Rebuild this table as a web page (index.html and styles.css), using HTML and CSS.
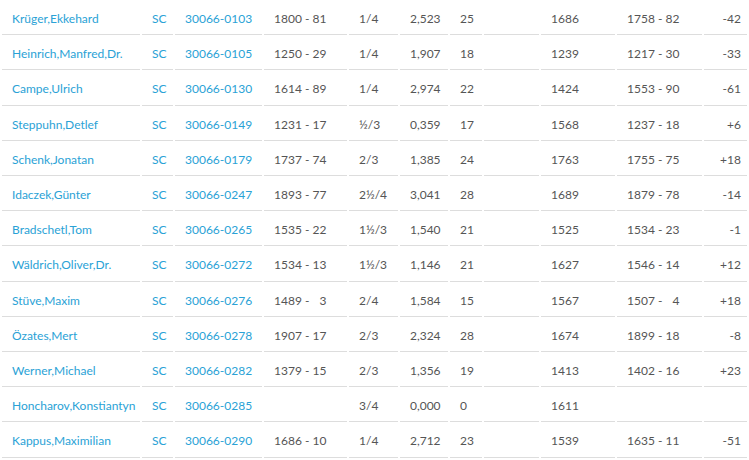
FILE: index.html
```html
<!DOCTYPE html>
<html lang="de">
<head>
<meta charset="utf-8">
<title>Spielerliste</title>
<link rel="stylesheet" href="styles.css">
</head>
<body>
<table class="players">
<colgroup>
<col class="w-name"><col class="w-club"><col class="w-id"><col class="w-elo"><col class="w-pts"><col class="w-we"><col class="w-n"><col class="w-gap"><col class="w-dwz"><col class="w-new"><col class="w-diff">
</colgroup>
<tbody>
<tr><td><a href="#">Krüger,Ekkehard</a></td><td><a href="#">SC</a></td><td><a href="#">30066-0103</a></td><td class="pre">1800 - 81</td><td>1/4</td><td>2,523</td><td>25</td><td></td><td>1686</td><td class="pre">1758 - 82</td><td class="r">-42</td></tr>
<tr><td><a href="#">Heinrich,Manfred,Dr.</a></td><td><a href="#">SC</a></td><td><a href="#">30066-0105</a></td><td class="pre">1250 - 29</td><td>1/4</td><td>1,907</td><td>18</td><td></td><td>1239</td><td class="pre">1217 - 30</td><td class="r">-33</td></tr>
<tr><td><a href="#">Campe,Ulrich</a></td><td><a href="#">SC</a></td><td><a href="#">30066-0130</a></td><td class="pre">1614 - 89</td><td>1/4</td><td>2,974</td><td>22</td><td></td><td>1424</td><td class="pre">1553 - 90</td><td class="r">-61</td></tr>
<tr><td><a href="#">Steppuhn,Detlef</a></td><td><a href="#">SC</a></td><td><a href="#">30066-0149</a></td><td class="pre">1231 - 17</td><td>½/3</td><td>0,359</td><td>17</td><td></td><td>1568</td><td class="pre">1237 - 18</td><td class="r">+6</td></tr>
<tr><td><a href="#">Schenk,Jonatan</a></td><td><a href="#">SC</a></td><td><a href="#">30066-0179</a></td><td class="pre">1737 - 74</td><td>2/3</td><td>1,385</td><td>24</td><td></td><td>1763</td><td class="pre">1755 - 75</td><td class="r">+18</td></tr>
<tr><td><a href="#">Idaczek,Günter</a></td><td><a href="#">SC</a></td><td><a href="#">30066-0247</a></td><td class="pre">1893 - 77</td><td>2½/4</td><td>3,041</td><td>28</td><td></td><td>1689</td><td class="pre">1879 - 78</td><td class="r">-14</td></tr>
<tr><td><a href="#">Bradschetl,Tom</a></td><td><a href="#">SC</a></td><td><a href="#">30066-0265</a></td><td class="pre">1535 - 22</td><td>1½/3</td><td>1,540</td><td>21</td><td></td><td>1525</td><td class="pre">1534 - 23</td><td class="r">-1</td></tr>
<tr><td><a href="#">Wäldrich,Oliver,Dr.</a></td><td><a href="#">SC</a></td><td><a href="#">30066-0272</a></td><td class="pre">1534 - 13</td><td>1½/3</td><td>1,146</td><td>21</td><td></td><td>1627</td><td class="pre">1546 - 14</td><td class="r">+12</td></tr>
<tr><td><a href="#">Stüve,Maxim</a></td><td><a href="#">SC</a></td><td><a href="#">30066-0276</a></td><td class="pre">1489 - &#8199;3</td><td>2/4</td><td>1,584</td><td>15</td><td></td><td>1567</td><td class="pre">1507 - &#8199;4</td><td class="r">+18</td></tr>
<tr><td><a href="#">Özates,Mert</a></td><td><a href="#">SC</a></td><td><a href="#">30066-0278</a></td><td class="pre">1907 - 17</td><td>2/3</td><td>2,324</td><td>28</td><td></td><td>1674</td><td class="pre">1899 - 18</td><td class="r">-8</td></tr>
<tr><td><a href="#">Werner,Michael</a></td><td><a href="#">SC</a></td><td><a href="#">30066-0282</a></td><td class="pre">1379 - 15</td><td>2/3</td><td>1,356</td><td>19</td><td></td><td>1413</td><td class="pre">1402 - 16</td><td class="r">+23</td></tr>
<tr><td><a href="#">Honcharov,Konstiantyn</a></td><td><a href="#">SC</a></td><td><a href="#">30066-0285</a></td><td class="pre"></td><td>3/4</td><td>0,000</td><td>0</td><td></td><td>1611</td><td class="pre"></td><td class="r"></td></tr>
<tr><td><a href="#">Kappus,Maximilian</a></td><td><a href="#">SC</a></td><td><a href="#">30066-0290</a></td><td class="pre">1686 - 10</td><td>1/4</td><td>2,712</td><td>23</td><td></td><td>1539</td><td class="pre">1635 - 11</td><td class="r">-51</td></tr>
</tbody>
</table>
</body>
</html>
```
FILE: styles.css
```css
html, body {
  margin: 0;
  padding: 0;
  background: #ffffff;
}
body {
  font-family: Lato, "Open Sans", "DejaVu Sans", sans-serif;
  font-size: 12px;
  color: #555555;
}
.players {
  width: 749px;
  table-layout: fixed;
  border-collapse: separate;
  border-spacing: 2px 0;
}
.players td {
  padding: 10px 6px 6px 10px;
  line-height: 18.2px;
  border-bottom: 1px solid #dddddd;
  white-space: nowrap;
  overflow: hidden;
  vertical-align: middle;
}
.players a {
  color: #2aa2d6;
  text-decoration: none;
}
.players td.pre { white-space: pre; }
.players td.r { text-align: right; }
.w-name { width: 138px; }
.w-club { width: 31px; }
.w-id { width: 87px; }
.w-elo { width: 83px; }
.w-pts { width: 49px; }
.w-we { width: 48px; }
.w-n { width: 32px; }
.w-gap { width: 55px; }
.w-dwz { width: 74px; }
.w-new { width: 85px; }
.w-diff { width: 43px; }
```
